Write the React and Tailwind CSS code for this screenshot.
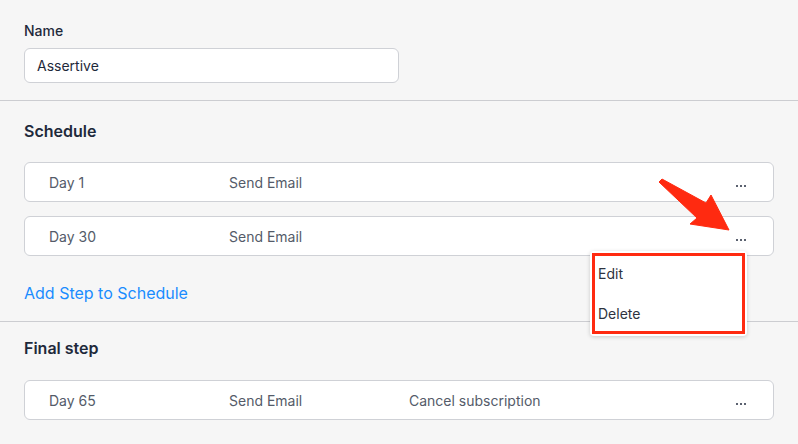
export default function App() {
  const font = { fontFamily: "Inter, 'Noto Sans', sans-serif" };
  const Row = ({ day, action, extra }) => (
    <div className="flex h-[40px] items-center rounded-[6px] border border-[#cfd1d6] bg-white pl-[24px] pr-[27px] text-[14px] text-[#545b69]">
      <div className="w-[180px]">{day}</div>
      <div className="w-[180px]">{action}</div>
      <div className="flex-1">{extra}</div>
      <div className="flex gap-[2px] pt-[7px]">
        <span className="h-[2px] w-[2px] bg-[#5b6270]" />
        <span className="h-[2px] w-[2px] bg-[#5b6270]" />
        <span className="h-[2px] w-[2px] bg-[#5b6270]" />
      </div>
    </div>
  );
  return (
    <div className="relative h-[444px] w-[798px] overflow-hidden bg-[#f6f6f6]" style={font}>
      <div className="px-[24px] pb-[17px] pt-[21px]">
        <div className="text-[14px] font-medium leading-[20px] text-[#1e293b]">Name</div>
        <div className="mt-[7px] flex h-[35px] w-[375px] items-center rounded-[6px] border border-[#cfd1d6] bg-white px-[12px] text-[14px] text-[#1e293b]">
          Assertive
        </div>
      </div>
      <div className="border-t border-[#cccdd1] px-[24px] pb-[16px] pt-[18px]">
        <div className="text-[16px] font-semibold leading-[24px] text-[#1e293b]">Schedule</div>
        <div className="mt-[19px] flex flex-col gap-[14px]">
          <Row day="Day 1" action="Send Email" />
          <Row day="Day 30" action="Send Email" />
        </div>
        <div className="mt-[25px] text-[16px] leading-[24px] text-[#1a8cff]">Add Step to Schedule</div>
      </div>
      <div className="border-t border-[#cccdd1] px-[24px] pt-[14px]">
        <div className="text-[16px] font-semibold leading-[24px] text-[#1e293b]">Final step</div>
        <div className="mt-[20px]">
          <Row day="Day 65" action="Send Email" extra="Cancel subscription" />
        </div>
      </div>

      <div className="absolute left-[590px] top-[251px] h-[85px] w-[157px] rounded-[4px] bg-white p-[2px] shadow-[0_1px_4px_rgba(0,0,0,0.18)]">
        <div className="flex h-full flex-col border-[3px] border-[#ff2a10] text-[14px] text-[#2e3340]">
          <div className="pl-[3px] pt-[8px] leading-[20px]">Edit</div>
          <div className="pl-[3px] pt-[20px] leading-[20px]">Delete</div>
        </div>
      </div>

      <svg className="absolute left-0 top-0" width="798" height="444" viewBox="0 0 798 444">
        <polygon
          points="659,182 662,179 706,203 711,195 729,230 690,224 697,218"
          fill="#ff2a10"
          stroke="#ff2a10"
          strokeWidth="1"
          strokeLinejoin="round"
        />
      </svg>
    </div>
  );
}
